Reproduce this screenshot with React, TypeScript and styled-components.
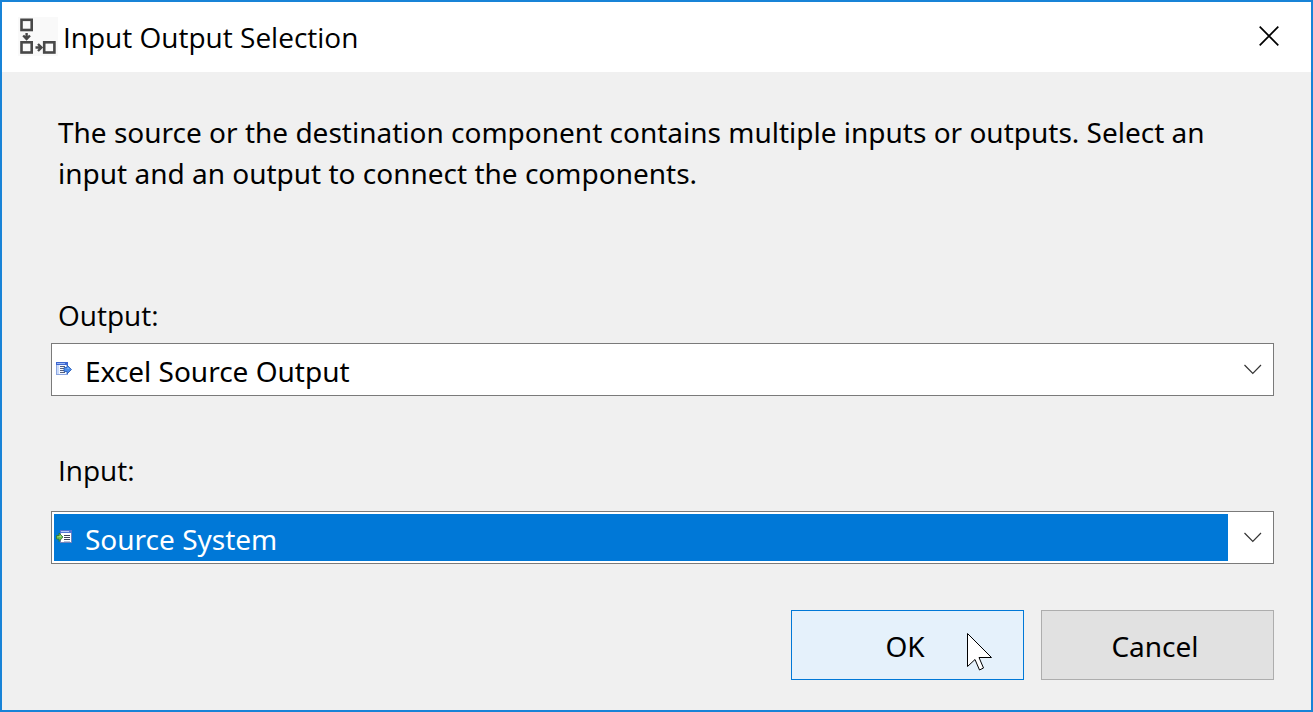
import React from "react";
import styled, { createGlobalStyle, css } from "styled-components";

const headingFont = `"Open Sans", "Noto Sans", sans-serif`;
const bodyFont = `"Noto Sans", "Open Sans", sans-serif`;

const GlobalStyle = createGlobalStyle`
  *, *::before, *::after { box-sizing: border-box; }
  body { margin: 0; background: #f0f0f0; }
  body, button, select {
    font-family: ${bodyFont};
    font-size: 28px;
    color: #000;
  }
`;

const Dialog = styled.form`
  display: flex;
  flex-direction: column;
  min-height: 100vh;
  border: 2px solid #1883d7;
  background: #f0f0f0;
`;

const TitleBar = styled.header`
  display: flex;
  align-items: center;
  height: 70px;
  padding: 0 28px 0 16px;
  background: #fff;
`;

const Title = styled.h1`
  flex: 1;
  margin: 0 0 0 5px;
  font-family: ${headingFont};
  font-size: 28px;
  font-weight: 400;
  line-height: 40px;
`;

const CloseButton = styled.button`
  display: flex;
  padding: 4px 4px 6px;
  border: 0;
  background: transparent;
`;

const Content = styled.main`
  display: flex;
  flex: 1;
  flex-direction: column;
  padding: 40px 37px 30px 49px;
`;

const Message = styled.p`
  margin: 0 0 101px;
  padding: 0 7px;
  line-height: 41px;
`;

const Field = styled.div`
  display: flex;
  flex-direction: column;
  gap: 7px;
  margin-bottom: 54px;

  & + & {
    gap: 20px;
    margin-bottom: 46px;
  }
`;

const Label = styled.label`
  padding: 0 7px;
  font-family: ${headingFont};
  line-height: 41px;
`;

const Combo = styled.div`
  position: relative;
  height: 53px;
  padding: 2px;
  border: 1px solid #7a7a7a;
  background: #fff;
`;

const Select = styled.select<{ $highlighted?: boolean }>`
  display: block;
  width: 100%;
  height: 100%;
  padding: 2px 0 0 31px;
  border: 0;
  border-right: 43px solid #fff;
  border-radius: 0;
  outline: 0;
  appearance: none;
  background: #fff;
  ${(p) => p.$highlighted && css`
    background: #0078d7;
    color: #fff;
  `}
`;

const ItemIcon = styled.svg`
  position: absolute;
  top: 17px;
  left: 4px;
  pointer-events: none;
`;

const Chevron = styled.svg`
  position: absolute;
  top: 20px;
  right: 11px;
  pointer-events: none;
`;

const Actions = styled.footer`
  display: flex;
  justify-content: flex-end;
  gap: 17px;
  margin-top: auto;
`;

const ActionButton = styled.button<{ $hot?: boolean }>`
  position: relative;
  width: 233px;
  height: 70px;
  padding: 2px 5px 0 0;
  border: 1px solid ${(p) => (p.$hot ? "#0078d7" : "#adadad")};
  background: ${(p) => (p.$hot ? "#e5f1fb" : "#e1e1e1")};
`;

const Pointer = styled.svg`
  position: absolute;
  top: 21px;
  right: 30px;
`;

const FlowIcon = () => (
  <svg width="40" height="40" viewBox="0 0 40 40" aria-hidden="true">
    <rect x="0" y="-1" width="40" height="40" fill="#f9f9f9" />
    <g fill="#fafafa" stroke="#484848" strokeWidth="2.600">
      <rect x="3.500" y="2.800" width="10.200" height="10.200" />
      <rect x="3.500" y="25.300" width="10.200" height="10.200" />
      <rect x="26.200" y="25.300" width="10.200" height="10.200" />
    </g>
    <g fill="none" stroke="#484848" strokeWidth="2.400">
      <path d="M8.600 16v6M5.200 18.500l3.400 3.500 3.400-3.500" />
      <path d="M17.500 30.500h6M20 27l3.500 3.500-3.500 3.500" />
    </g>
  </svg>
);

const CloseIcon = () => (
  <svg width="20" height="20" viewBox="0 0 20 20" aria-hidden="true">
    <path d="M.7.7l18.600 18.600M19.300.7L.7 19.300" fill="none" stroke="#000" strokeWidth="1.700" />
  </svg>
);

const OutputIcon = () => (
  <ItemIcon width="16" height="16" viewBox="0 0 16 16" aria-hidden="true">
    <rect x=".5" y="1.500" width="11" height="12" fill="#f4f8ff" stroke="#8ba5e0" />
    <path d="M0 1h12v3H0z" fill="#3d66d0" />
    <path d="M1 2h8v1H1z" fill="#9ab6f2" />
    <path d="M1 4h2v9H1z" fill="#c9dafa" />
    <path d="M4 5.500h5M4 7.500h4M4 9.500h4M4 11.500h5" stroke="#555f7c" />
    <path d="M8 6.500h3V4l4.500 4.500L11 13v-2.500H8z" fill="#4c8ce8" stroke="#2456b4" strokeWidth=".8" />
    <path d="M8.500 7.500h3V6l2 2z" fill="#8dc1fa" />
  </ItemIcon>
);

const InputIcon = () => (
  <ItemIcon width="16" height="16" viewBox="0 0 16 16" aria-hidden="true">
    <rect x="4.500" y="1.500" width="11" height="12" fill="#fff" stroke="#6f83bd" />
    <path d="M4 1h12v3H4z" fill="#5276d3" />
    <path d="M5 2h8v1H5z" fill="#b4c8f7" />
    <path d="M8 6.500h6M8 8.500h6M8 10.500h6" stroke="#3e435c" />
    <path d="M8 12.500h6" stroke="#b9c4dc" />
    <path d="M.5 6.500h2.500V4L7 8l-4 4.500V10H.5z" fill="#71bd50" stroke="#2e792d" strokeWidth=".8" />
    <path d="M1 7h3V6l1.500 2z" fill="#b9e69b" />
  </ItemIcon>
);

const ChevronIcon = () => (
  <Chevron width="18" height="11" viewBox="0 0 18 11" aria-hidden="true">
    <path d="M.5 1L8.800 9.500 17 1" fill="none" stroke="#333" strokeWidth="1.200" />
  </Chevron>
);

const PointerIcon = () => (
  <Pointer width="27" height="40" viewBox="0 0 27 40" aria-hidden="true">
    <path
      d="M1.500 1.500v33l7.500-7 4.500 10.500 4-2-4.500-10.500h12.500z"
      fill="#fff"
      stroke="#000"
      strokeWidth="1"
    />
  </Pointer>
);

export default function App() {
  return (
    <>
      <GlobalStyle />
      <Dialog onSubmit={(e: React.FormEvent) => e.preventDefault()}>
        <TitleBar>
          <FlowIcon />
          <Title>Input Output Selection</Title>
          <CloseButton type="button" aria-label="Close">
            <CloseIcon />
          </CloseButton>
        </TitleBar>
        <Content>
          <Message>
            The source or the destination component contains multiple inputs or outputs. Select an
            input and an output to connect the components.
          </Message>
          <Field>
            <Label htmlFor="output">Output:</Label>
            <Combo>
              <Select id="output">
                <option>Excel Source Output</option>
              </Select>
              <OutputIcon />
              <ChevronIcon />
            </Combo>
          </Field>
          <Field>
            <Label htmlFor="input">Input:</Label>
            <Combo>
              <Select id="input" $highlighted>
                <option>Source System</option>
              </Select>
              <InputIcon />
              <ChevronIcon />
            </Combo>
          </Field>
          <Actions>
            <ActionButton type="submit" $hot>
              OK
              <PointerIcon />
            </ActionButton>
            <ActionButton type="button">Cancel</ActionButton>
          </Actions>
        </Content>
      </Dialog>
    </>
  );
}
